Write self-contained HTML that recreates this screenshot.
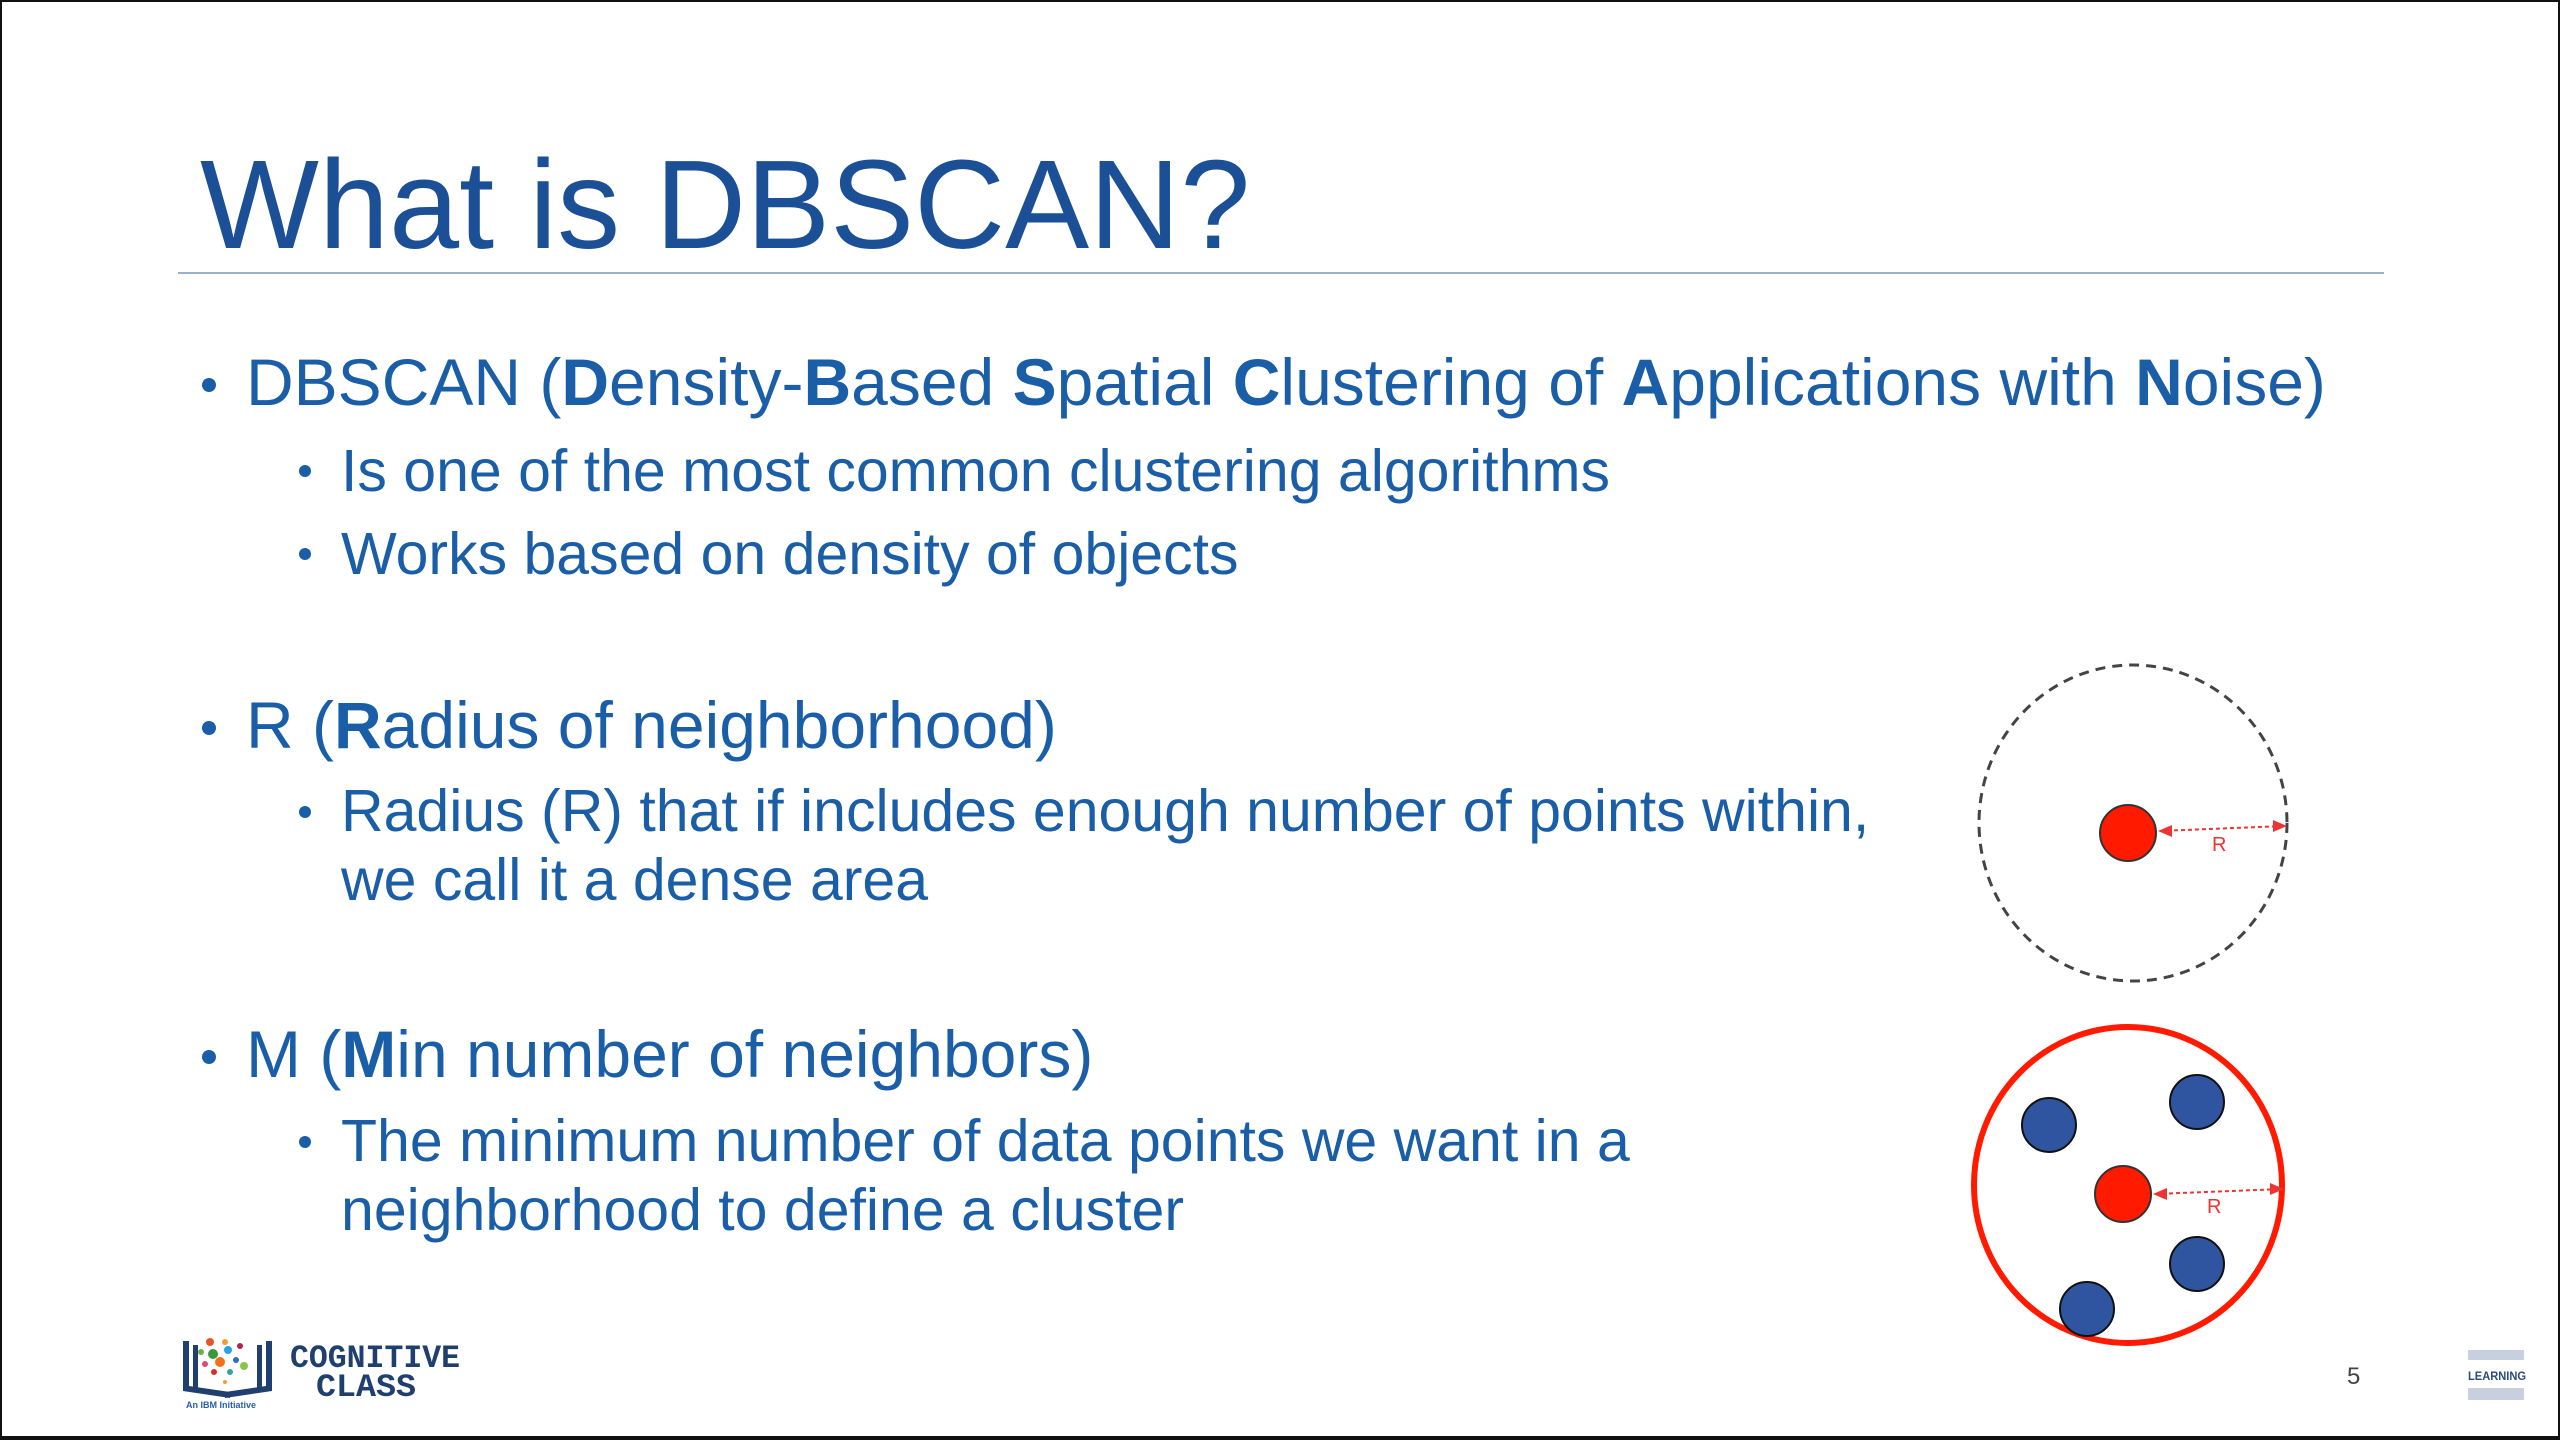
<!DOCTYPE html>
<html><head><meta charset="utf-8"><style>
html,body{margin:0;padding:0;}
body{width:2560px;height:1440px;position:relative;background:#fff;overflow:hidden;font-family:"Liberation Sans",sans-serif;}
.frame{position:absolute;left:0;top:0;width:2556px;height:1434px;border:2px solid #111;border-bottom:4px solid #111;}
.t{position:absolute;white-space:nowrap;color:#1a5ea8;}
.title{left:200px;top:132px;font-size:126px;color:#1b4f96;letter-spacing:0px;}
.rule{position:absolute;left:178px;top:272px;width:2206px;height:2px;background:#9ab0cc;}
.l1{font-size:66px;}
.l2{font-size:59px;}
.dot{position:absolute;border-radius:50%;background:#1a5ea8;}
b{font-weight:bold;}
</style></head><body>
<div class="frame"></div>
<div class="t title">What is DBSCAN?</div>
<div class="rule"></div>

<div class="dot" style="left:202px;top:378px;width:14px;height:14px"></div>
<div class="t l1" style="left:246px;top:344px">DBSCAN (<b>D</b>ensity-<b>B</b>ased <b>S</b>patial <b>C</b>lustering of <b>A</b>pplications with <b>N</b>oise)</div>
<div class="dot" style="left:299px;top:465px;width:12px;height:12px"></div>
<div class="t l2" style="left:341px;top:437px">Is one of the most common clustering algorithms</div>
<div class="dot" style="left:299px;top:548px;width:12px;height:12px"></div>
<div class="t l2" style="left:341px;top:520px">Works based on density of objects</div>

<div class="dot" style="left:202px;top:721px;width:14px;height:14px"></div>
<div class="t l1" style="left:246px;top:687px">R (<b>R</b>adius of neighborhood)</div>
<div class="dot" style="left:299px;top:806px;width:12px;height:12px"></div>
<div class="t l2" style="left:341px;top:777px;line-height:69px">Radius (R) that if includes enough number of points within,<br>we call it a dense area</div>

<div class="dot" style="left:202px;top:1050px;width:14px;height:14px"></div>
<div class="t l1" style="left:246px;top:1016px">M (<b>M</b>in number of neighbors)</div>
<div class="dot" style="left:299px;top:1136px;width:12px;height:12px"></div>
<div class="t l2" style="left:341px;top:1107px;line-height:69px">The minimum number of data points we want in a<br>neighborhood to define a cluster</div>

<svg style="position:absolute;left:0;top:0" width="2560" height="1440">
<ellipse cx="2133" cy="823" rx="154" ry="158" fill="none" stroke="#444" stroke-width="3" stroke-dasharray="10 7"/>
<circle cx="2128" cy="833" r="28" fill="#ff1a00" stroke="#333" stroke-width="2"/>
<line x1="2160" y1="831" x2="2284" y2="826" stroke="#e33" stroke-width="2" stroke-dasharray="4 3"/>
<polygon points="2158,831 2172,825 2172,837" fill="#e33"/>
<polygon points="2287,826 2273,820 2273,832" fill="#e33"/>
<text x="2212" y="851" font-size="20" fill="#e33" font-family="Liberation Sans">R</text>
<ellipse cx="2128" cy="1185" rx="154" ry="158" fill="none" stroke="#ff1a00" stroke-width="6"/>
<circle cx="2049" cy="1125" r="27" fill="#2f55a0" stroke="#111" stroke-width="2"/>
<circle cx="2197" cy="1102" r="27" fill="#2f55a0" stroke="#111" stroke-width="2"/>
<circle cx="2197" cy="1264" r="27" fill="#2f55a0" stroke="#111" stroke-width="2"/>
<circle cx="2087" cy="1309" r="27" fill="#2f55a0" stroke="#111" stroke-width="2"/>
<circle cx="2123" cy="1194" r="28" fill="#ff1a00" stroke="#333" stroke-width="2"/>
<line x1="2155" y1="1194" x2="2282" y2="1189" stroke="#e33" stroke-width="2" stroke-dasharray="4 3"/>
<polygon points="2153,1194 2167,1188 2167,1200" fill="#e33"/>
<polygon points="2284,1189 2270,1183 2270,1195" fill="#e33"/>
<text x="2207" y="1213" font-size="20" fill="#e33" font-family="Liberation Sans">R</text>
<g fill="#1f3f6e">
<rect x="183" y="1341" width="6" height="50"/><rect x="193" y="1345" width="5" height="43"/>
<path d="M183 1391 L230 1398 L230 1392 L189 1386Z"/>
<rect x="266" y="1341" width="6" height="50"/><rect x="257" y="1345" width="5" height="43"/>
<path d="M272 1391 L225 1398 L225 1392 L266 1386Z"/>
</g>
<circle cx="210" cy="1342" r="4" fill="#e8542a"/><circle cx="225" cy="1342" r="3" fill="#f0a030"/>
<circle cx="201" cy="1352" r="3" fill="#6ab04c"/><circle cx="213" cy="1354" r="5" fill="#3a9a3a"/>
<circle cx="228" cy="1350" r="4" fill="#29a3e0"/><circle cx="240" cy="1346" r="3" fill="#b02050"/>
<circle cx="220" cy="1362" r="5" fill="#f07020"/><circle cx="236" cy="1360" r="3" fill="#2a70c0"/>
<circle cx="205" cy="1364" r="3" fill="#e04a70"/><circle cx="244" cy="1366" r="4" fill="#8bc34a"/>
<circle cx="230" cy="1372" r="3" fill="#3aa0a0"/><circle cx="214" cy="1372" r="3" fill="#d03030"/>
<circle cx="225" cy="1382" r="2" fill="#f0a030"/>
<text x="186" y="1408" font-size="9" font-weight="bold" fill="#2a5ca8" font-family="Liberation Sans">An IBM Initiative</text>
<text x="290" y="1367" font-size="32" font-weight="bold" fill="#1f3f6e" font-family="Liberation Mono" textLength="170" lengthAdjust="spacingAndGlyphs">COGNITIVE</text>
<text x="316" y="1396" font-size="32" font-weight="bold" fill="#1f3f6e" font-family="Liberation Mono" textLength="100" lengthAdjust="spacingAndGlyphs">CLASS</text>
<text x="2347" y="1384" font-size="24" fill="#444" font-family="Liberation Sans">5</text>
<text x="2468" y="1380" font-size="12" font-weight="bold" fill="#2a4a80" font-family="Liberation Sans" textLength="58" lengthAdjust="spacingAndGlyphs">LEARNING</text>
<rect x="2468" y="1350" width="56" height="10" fill="#c8d0e0"/>
<rect x="2468" y="1388" width="56" height="12" fill="#c8d0e0"/>
</svg>
</body></html>
